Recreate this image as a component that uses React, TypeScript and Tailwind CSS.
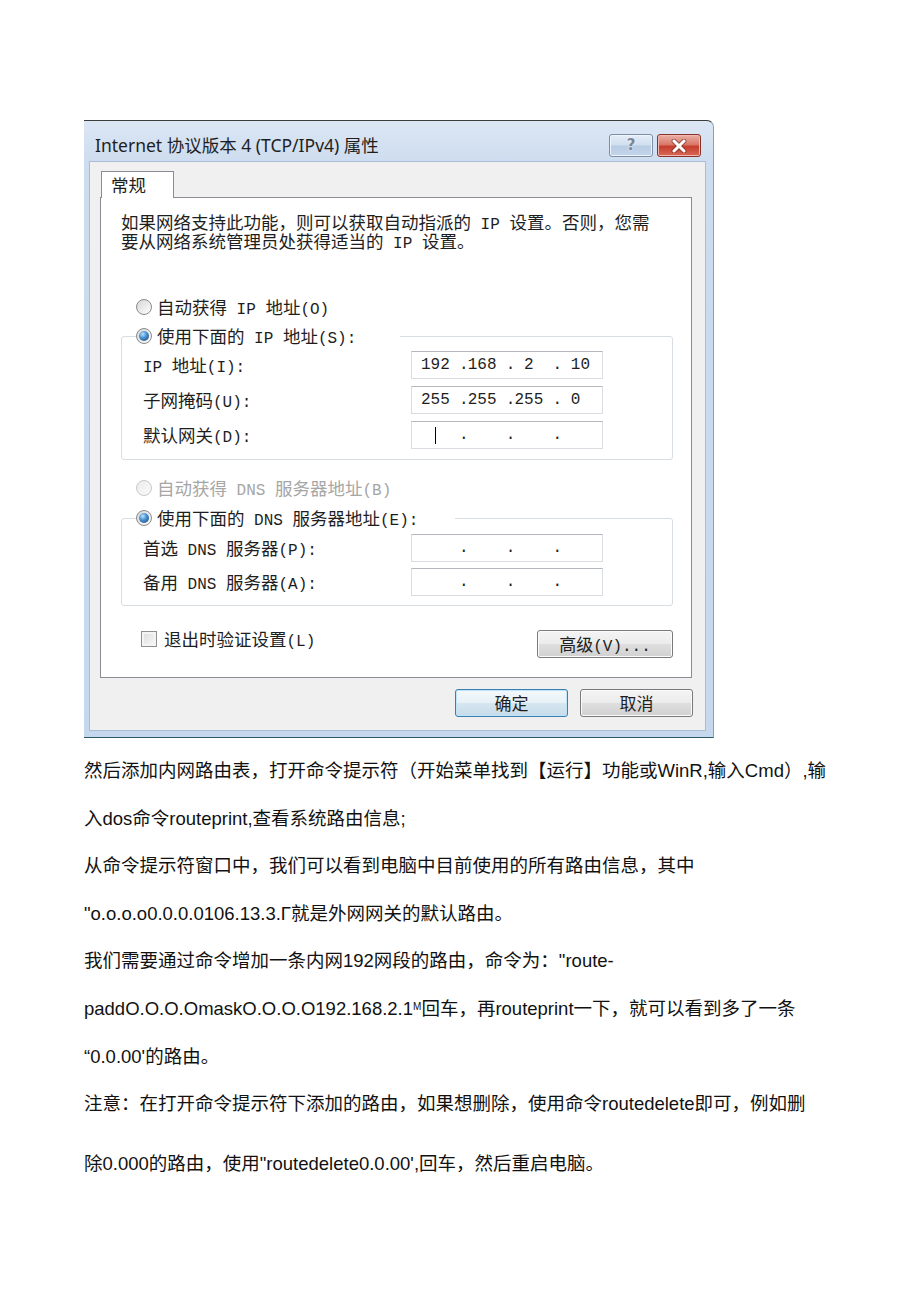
import React from 'react';

const H = ({ children }: { children: React.ReactNode }) => (
  <span className="font-['Liberation_Mono',monospace] text-[16px] leading-none">{children}</span>
);

const Radio = ({ checked, disabled }: { checked?: boolean; disabled?: boolean }) => (
  <span
    className={`flex h-[16px] w-[16px] shrink-0 items-center justify-center rounded-full border ${
      disabled
        ? 'border-[#c8c8c8] bg-[linear-gradient(135deg,#ececec,#fafafa)]'
        : 'border-[#8a8a8a] bg-[linear-gradient(135deg,#d6d6d6,#ffffff)]'
    }`}
  >
    {checked && (
      <span className="h-[10px] w-[10px] rounded-full bg-[radial-gradient(circle_at_38%_32%,#bfe3fb_0%,#4a93d3_40%,#173f6d_100%)]" />
    )}
  </span>
);

const Checkbox = () => (
  <span className="h-[16px] w-[16px] shrink-0 border border-[#8f8f8f] bg-[linear-gradient(135deg,#dcdcdc,#f9f9f9)] shadow-[inset_0_0_0_2px_#f4f4f4]" />
);

const IpBox = ({ parts, caret }: { parts: string[]; caret?: boolean }) => (
  <div className="flex h-[28px] w-[192px] items-center border border-[#d9dde2] border-t-[#b4b7bd] bg-white pl-[7px] font-['Liberation_Mono',monospace] text-[16px] text-[#1e1e1e]">
    {parts.map((p, i) => (
      <React.Fragment key={i}>
        {i > 0 && <span className="flex w-[4px] justify-center">.</span>}
        <span className="flex w-[43px] items-center pl-[2px] whitespace-pre">
          {caret && i === 0 ? <span className="ml-[14px] h-[17px] w-px bg-black" /> : p}
        </span>
      </React.Fragment>
    ))}
  </div>
);

const Btn = ({
  children,
  primary,
  width,
}: {
  children: React.ReactNode;
  primary?: boolean;
  width: string;
}) => (
  <div
    className={`flex h-[28px] items-center justify-center rounded-[3px] border text-[17px] text-[#1e1e1e] ${width} ${
      primary
        ? 'border-[#3c7fb1] bg-[linear-gradient(#f3f8fb_0%,#e8f1f7_48%,#d5e6f1_52%,#c6dbe9_100%)] shadow-[inset_0_0_0_1px_#bfe3f8]'
        : 'border-[#7a7a7a] bg-[linear-gradient(#f4f4f4_0%,#ececec_48%,#dedede_52%,#d1d1d1_100%)] shadow-[inset_0_0_0_1px_#fbfbfb]'
    }`}
  >
    <span>{children}</span>
  </div>
);

const Row = ({ label, children }: { label: React.ReactNode; children: React.ReactNode }) => (
  <div className="flex h-[28px] items-center">
    <div className="w-[268px]">{label}</div>
    {children}
  </div>
);

function TitleButtons() {
  return (
    <div className="flex gap-[4px]">
      <div className="flex h-[23px] w-[44px] items-center justify-center rounded-[3px] border border-[#7d8ea6] bg-[linear-gradient(#e4edf7_0%,#d0deef_48%,#b8cce4_52%,#c3d5ea_100%)] shadow-[inset_0_0_0_1px_#eef4fb]">
        <span className="font-['DejaVu_Sans',sans-serif] text-[15px] font-bold leading-none text-[#7b8595] [text-shadow:0_0_2px_#ffffff]">
          ?
        </span>
      </div>
      <div className="flex h-[23px] w-[44px] items-center justify-center rounded-[3px] border border-[#8a3228] bg-[linear-gradient(#eab0a5_0%,#d9786a_45%,#c63d2d_55%,#d86a58_100%)] shadow-[inset_0_0_0_1px_#f0b8ae]">
        <svg width="16" height="14" viewBox="0 0 16 14">
          <path d="M3 2 L13 12 M13 2 L3 12" stroke="#6b241c" strokeWidth="5" strokeLinecap="round" opacity="0.55" />
          <path d="M3 2 L13 12 M13 2 L3 12" stroke="#ffffff" strokeWidth="3" strokeLinecap="round" />
        </svg>
      </div>
    </div>
  );
}

function Dialog() {
  return (
    <div className="flex h-[618px] w-[630px] flex-col rounded-tr-[7px] border-t border-r border-b border-t-[#3c3c3c] border-r-[#8aa0ba] border-b-[#2c5a64] bg-[linear-gradient(#dce7f4,#cddcef_42px,#c5d8ee)] pb-[7px] font-['Noto_Sans_CJK_SC',sans-serif]">
      <div className="flex h-[41px] shrink-0 items-center justify-between pt-[8px] pr-[12px] pl-[11px]">
        <span className="font-['Noto_Sans','Noto_Sans_CJK_SC',sans-serif] text-[17.5px] text-[#1e1e1e]">
          Internet 协议版本 4 (TCP/IPv4) 属性
        </span>
        <TitleButtons />
      </div>

      <div className="ml-[6px] mr-[8px] flex h-[568px] flex-col bg-[#f0f0f0] pt-[9px] pr-[12px] pb-[13px] pl-[10px] text-[17.5px] text-[#1e1e1e] shadow-[0_0_0_1px_#aabdd5]">
        <div className="flex h-[26px] items-start">
          <div className="relative z-10 ml-[1px] flex h-[27px] w-[73px] items-center border border-b-0 border-[#898c95] bg-white pl-[9px]">
            常规
          </div>
        </div>

        <div className="flex h-[481px] w-[592px] flex-col border border-[#898c95] bg-white pl-[20px]">
          <div className="mt-[14px] leading-[19px]">
            <div className="h-[19px]">
              如果网络支持此功能，则可以获取自动指派的<H> IP </H>设置。否则，您需
            </div>
            <div className="h-[19px]">
              要从网络系统管理员处获得适当的<H> IP </H>设置。
            </div>
          </div>

          <div className="mt-[47px] ml-[15px] flex h-[20px] items-center gap-[5px]">
            <Radio />
            <span>
              自动获得<H> IP </H>地址<H>(O)</H>
            </span>
          </div>

          <fieldset className="mt-[9px] w-[552px] rounded-[3px] border border-[#d8dde2] pt-[5px] pb-[10px]">
            <legend className="ml-[14px] flex h-[20px] w-[264px] items-center gap-[5px]">
              <Radio checked />
              <span>
                使用下面的<H> IP </H>地址<H>(S):</H>
              </span>
            </legend>
            <div className="flex flex-col gap-[7px] pl-[21px]">
              <Row
                label={
                  <>
                    <H>IP </H>地址<H>(I):</H>
                  </>
                }
              >
                <IpBox parts={['192', '168', ' 2', ' 10']} />
              </Row>
              <Row
                label={
                  <>
                    子网掩码<H>(U):</H>
                  </>
                }
              >
                <IpBox parts={['255', '255', '255', ' 0']} />
              </Row>
              <Row
                label={
                  <>
                    默认网关<H>(D):</H>
                  </>
                }
              >
                <IpBox parts={['', '', '', '']} caret />
              </Row>
            </div>
          </fieldset>

          <div className="mt-[18px] ml-[15px] flex h-[20px] items-center gap-[5px] text-[#a6a6a6]">
            <Radio disabled />
            <span>
              自动获得<H> DNS </H>服务器地址<H>(B)</H>
            </span>
          </div>

          <fieldset className="mt-[10px] w-[552px] rounded-[3px] border border-[#d8dde2] pt-[6px] pb-[9px]">
            <legend className="ml-[14px] flex h-[20px] w-[319px] items-center gap-[5px]">
              <Radio checked />
              <span>
                使用下面的<H> DNS </H>服务器地址<H>(E):</H>
              </span>
            </legend>
            <div className="flex flex-col gap-[6px] pl-[21px]">
              <Row
                label={
                  <>
                    首选<H> DNS </H>服务器<H>(P):</H>
                  </>
                }
              >
                <IpBox parts={['', '', '', '']} />
              </Row>
              <Row
                label={
                  <>
                    备用<H> DNS </H>服务器<H>(A):</H>
                  </>
                }
              >
                <IpBox parts={['', '', '', '']} />
              </Row>
            </div>
          </fieldset>

          <div className="mt-[24px] flex w-[552px] items-start justify-between">
            <div className="ml-[20px] flex h-[18px] items-center gap-[7px]">
              <Checkbox />
              <span>
                退出时验证设置<H>(L)</H>
              </span>
            </div>
            <Btn width="w-[136px]">
              高级<H>(V)...</H>
            </Btn>
          </div>
        </div>

        <div className="mt-[11px] flex justify-end gap-[12px]">
          <Btn primary width="w-[113px]">
            确定
          </Btn>
          <Btn width="w-[113px]">取消</Btn>
        </div>
      </div>
    </div>
  );
}

function Article() {
  const lines: React.ReactNode[] = [
    '然后添加内网路由表，打开命令提示符（开始菜单找到【运行】功能或WinR,输入Cmd）,输',
    '入dos命令routeprint,查看系统路由信息;',
    '从命令提示符窗口中，我们可以看到电脑中目前使用的所有路由信息，其中',
    '"o.o.o.o0.0.0.0106.13.3.Γ就是外网网关的默认路由。',
    '我们需要通过命令增加一条内网192网段的路由，命令为："route-',
    <>
      paddO.O.O.OmaskO.O.O.O192.168.2.1<sup className="text-[10px]">M</sup>回车，再routeprint一下，就可以看到多了一条
    </>,
    '“0.0.00\'的路由。',
    '注意：在打开命令提示符下添加的路由，如果想删除，使用命令routedelete即可，例如删',
  ];

  return (
    <div className="mt-[9px] font-['Liberation_Sans','Noto_Sans_CJK_SC',sans-serif] text-[18.5px] leading-[47.6px] text-[#111111]">
      {lines.map((line, index) => (
        <div key={index} className="whitespace-nowrap">
          {line}
        </div>
      ))}
      <div className="mt-[12px] whitespace-nowrap">
        除0.000的路由，使用"routedelete0.0.00',回车，然后重启电脑。
      </div>
    </div>
  );
}

export default function App() {
  return (
    <div className="min-h-[1301px] w-full bg-white pt-[120px] pl-[84px]">
      <Dialog />
      <Article />
    </div>
  );
}
